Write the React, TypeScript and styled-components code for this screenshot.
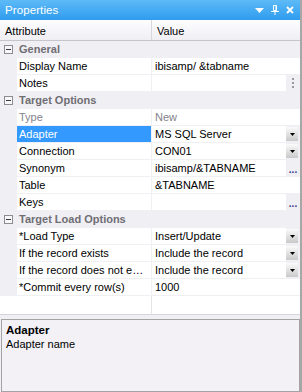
import React from 'react';
import styled, { createGlobalStyle } from 'styled-components';

const GlobalStyle = createGlobalStyle`
  html, body {
    margin: 0;
    padding: 0;
    background: #f0eff4;
  }
  body {
    font-family: "Liberation Sans", Arial, sans-serif;
    font-size: 11px;
    color: #000;
  }
`;

const Panel = styled.div`
  width: 300px;
  height: 392px;
  border-right: 2px solid #a7a7a7;
  background: #f0eff4;
  display: flex;
  flex-direction: column;
  overflow: hidden;
`;

const TitleBar = styled.div`
  height: 20px;
  flex: none;
  background: linear-gradient(#5dbaf7, #2f9cef);
  color: #fff;
  display: flex;
  align-items: center;
  padding: 0 6px 0 5px;
  font-size: 11.5px;
`;

const TitleText = styled.span`
  flex: 1;
  letter-spacing: 0.1px;
`;

const TitleIcons = styled.div`
  display: flex;
  align-items: center;
  gap: 7px;
`;

const HeaderRow = styled.div`
  height: 20px;
  flex: none;
  display: flex;
  background: linear-gradient(#fdfdfe, #efeef4);
  border-bottom: 1px solid #c6c5cb;
`;

const HeaderCell = styled.div<{ $w?: number }>`
  ${(p) => (p.$w ? `width: ${p.$w}px;` : 'flex: 1;')}
  display: flex;
  align-items: center;
  padding-left: 5px;
  border-right: ${(p) => (p.$w ? '1px solid #d8d7dd' : 'none')};
  box-sizing: border-box;
  padding-top: 2px;
`;

const Row = styled.div`
  height: 16px;
  flex: none;
  display: flex;
  border-bottom: 1px solid #f0eff4;
`;

const Gutter = styled.div`
  width: 17px;
  flex: none;
  display: flex;
  align-items: center;
  justify-content: center;
  background: #f0eff4;
`;

const GroupLabel = styled.div`
  flex: 1;
  display: flex;
  align-items: center;
  padding-left: 2px;
  font-weight: bold;
  color: #6f6e73;
  background: #f0eff4;
`;

const NameCell = styled.div<{ $selected?: boolean; $muted?: boolean }>`
  width: 134px;
  flex: none;
  display: flex;
  align-items: center;
  padding-left: 2px;
  box-sizing: border-box;
  background: ${(p) => (p.$selected ? '#3399ff' : '#fff')};
  color: ${(p) => (p.$selected ? '#fff' : p.$muted ? '#84838a' : '#000')};
  white-space: nowrap;
  overflow: hidden;
  margin-right: 1px;
`;

const ValueCell = styled.div`
  flex: 1;
  display: flex;
  align-items: stretch;
  min-width: 0;
`;

const ValueText = styled.div<{ $muted?: boolean }>`
  flex: 1;
  display: flex;
  align-items: center;
  padding-left: 3px;
  background: #fff;
  color: ${(p) => (p.$muted ? '#84838a' : '#000')};
  white-space: nowrap;
  overflow: hidden;
`;

const DropButton = styled.div`
  width: 12px;
  flex: none;
  margin: 1px 2px 1px 0;
  background: linear-gradient(#fbfbfb, #c9c9c9);
  display: flex;
  align-items: center;
  justify-content: center;
`;

const SideButton = styled.div<{ $color: string }>`
  width: 14px;
  flex: none;
  margin-right: 0;
  background: #f0eff4;
  color: ${(p) => p.$color};
  display: flex;
  align-items: flex-end;
  justify-content: center;
  font-weight: bold;
  font-size: 10px;
  line-height: 12px;
  letter-spacing: 0px;
`;

const Filler = styled.div`
  height: 18px;
  flex: none;
  display: flex;
  border-bottom: 1px solid #d6d5db;
`;

const FillerLeft = styled.div`
  width: 151px;
  background: #fff;
  border-right: 1px solid #e4e3e8;
`;

const FillerRight = styled.div`
  flex: 1;
  background: #fff;
`;

const DescBox = styled.div`
  margin: 4px 0 0 1px;
  flex: 1;
  border: 1px solid #a3a3a3;
  background: #f3f1f5;
  padding: 4px 4px;
  display: flex;
  flex-direction: column;
  gap: 2px;
`;

const DescTitle = styled.div`
  font-weight: bold;
  font-size: 11.5px;
`;

const DescText = styled.div``;

const CollapseBox = () => (
  <svg width="9" height="9" viewBox="0 0 9 9">
    <rect x="0.5" y="0.5" width="8" height="8" fill="#f7f7f9" stroke="#8d8c92" />
    <line x1="2" y1="4.5" x2="7" y2="4.5" stroke="#3c3c3c" />
  </svg>
);

const Caret = () => (
  <svg width="5" height="3" viewBox="0 0 5 3">
    <polygon points="0,0 5,0 2.5,3" fill="#000" />
  </svg>
);

type Item =
  | { kind: 'group'; label: string }
  | {
      kind: 'prop';
      name: string;
      value: string;
      muted?: boolean;
      selected?: boolean;
      button?: 'drop' | 'dots' | 'vdots';
    };

const items: Item[] = [
  { kind: 'group', label: 'General' },
  { kind: 'prop', name: 'Display Name', value: 'ibisamp/ &tabname' },
  { kind: 'prop', name: 'Notes', value: '', button: 'vdots' },
  { kind: 'group', label: 'Target Options' },
  { kind: 'prop', name: 'Type', value: 'New', muted: true },
  { kind: 'prop', name: 'Adapter', value: 'MS SQL Server', selected: true, button: 'drop' },
  { kind: 'prop', name: 'Connection', value: 'CON01', button: 'drop' },
  { kind: 'prop', name: 'Synonym', value: 'ibisamp/&TABNAME', button: 'dots' },
  { kind: 'prop', name: 'Table', value: '&TABNAME' },
  { kind: 'prop', name: 'Keys', value: '', button: 'dots' },
  { kind: 'group', label: 'Target Load Options' },
  { kind: 'prop', name: '*Load Type', value: 'Insert/Update', button: 'drop' },
  { kind: 'prop', name: 'If the record exists', value: 'Include the record', button: 'drop' },
  { kind: 'prop', name: 'If the record does not e\u2026', value: 'Include the record', button: 'drop' },
  { kind: 'prop', name: '*Commit every row(s)', value: '1000' },
];

const App: React.FC = () => (
  <>
    <GlobalStyle />
    <Panel>
      <TitleBar>
        <TitleText>Properties</TitleText>
        <TitleIcons>
          <svg width="9" height="5" viewBox="0 0 9 5">
            <polygon points="0,0 9,0 4.5,5" fill="#fff" />
          </svg>
          <svg width="8" height="10" viewBox="0 0 8 10">
            <path d="M2.5 0.5h3v5h-3z" fill="none" stroke="#fff" />
            <rect x="4.5" y="0.5" width="1.5" height="5" fill="#fff" />
            <rect x="0" y="6" width="8" height="1" fill="#fff" />
            <rect x="3.5" y="7" width="1" height="3" fill="#fff" />
          </svg>
          <svg width="8" height="8" viewBox="0 0 8 8">
            <path d="M1 1L7 7M7 1L1 7" stroke="#fff" strokeWidth="1.8" />
          </svg>
        </TitleIcons>
      </TitleBar>
      <HeaderRow>
        <HeaderCell $w={152}>Attribute</HeaderCell>
        <HeaderCell>Value</HeaderCell>
      </HeaderRow>
      {items.map((it, i) =>
        it.kind === 'group' ? (
          <Row key={i}>
            <Gutter>
              <CollapseBox />
            </Gutter>
            <GroupLabel>{it.label}</GroupLabel>
          </Row>
        ) : (
          <Row key={i}>
            <Gutter />
            <NameCell $selected={it.selected} $muted={it.muted}>
              {it.name}
            </NameCell>
            <ValueCell>
              <ValueText $muted={it.muted}>{it.value}</ValueText>
              {it.button === 'drop' && (
                <>
                  <DropButton>
                    <Caret />
                  </DropButton>
                </>
              )}
              {it.button === 'dots' && <SideButton $color="#3a3a8a">...</SideButton>}
              {it.button === 'vdots' && (
                <SideButton $color="#9a9a9e">
                  <svg width="2" height="10" viewBox="0 0 2 10" style={{ marginBottom: 3 }}>
                    <rect x="0" y="0" width="2" height="2" fill="#9a9a9e" />
                    <rect x="0" y="4" width="2" height="2" fill="#9a9a9e" />
                    <rect x="0" y="8" width="2" height="2" fill="#9a9a9e" />
                  </svg>
                </SideButton>
              )}
            </ValueCell>
          </Row>
        )
      )}
      <Filler>
        <FillerLeft />
        <FillerRight />
      </Filler>
      <DescBox>
        <DescTitle>Adapter</DescTitle>
        <DescText>Adapter name</DescText>
      </DescBox>
    </Panel>
  </>
);

export default App;
